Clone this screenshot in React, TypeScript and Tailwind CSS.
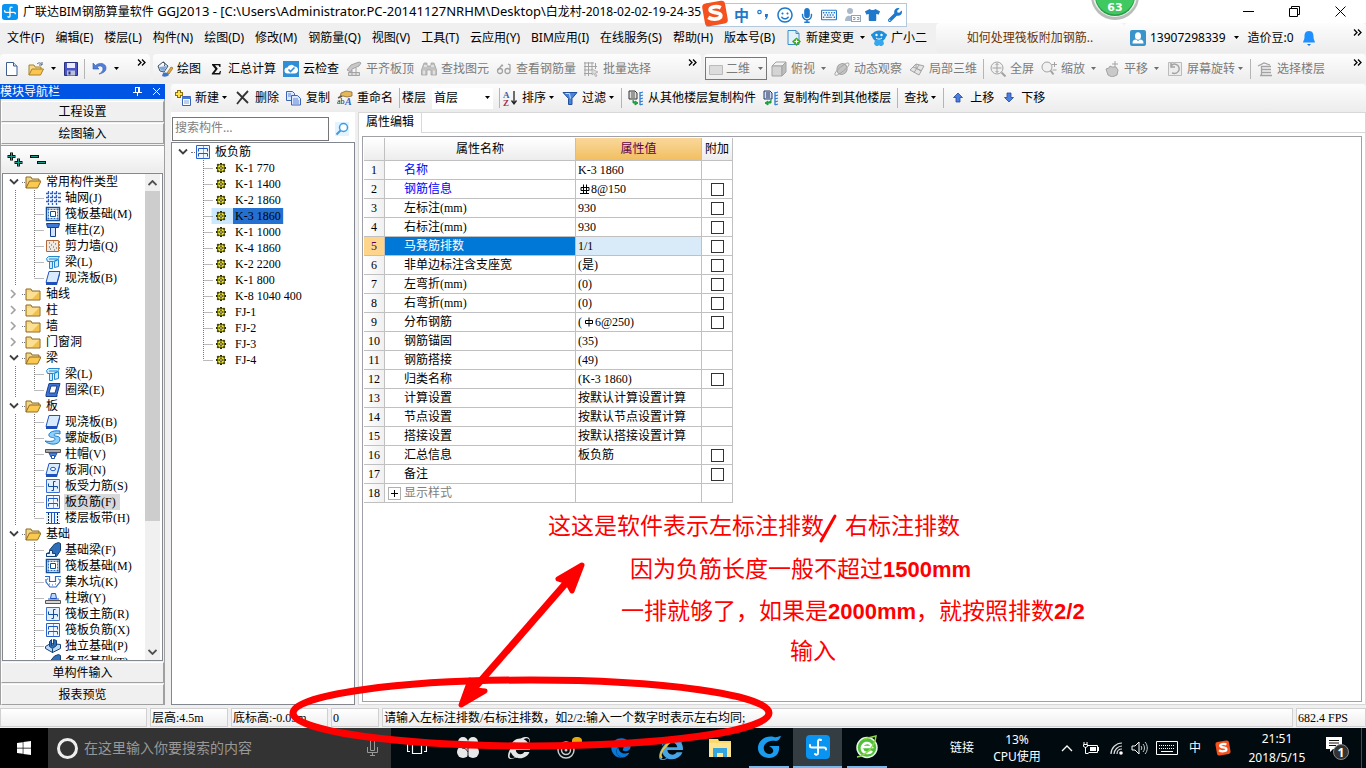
import React from "react";
import { FaWindows, FaInternetExplorer, FaEdge, FaMicrophone, FaRegSmile, FaRegKeyboard, FaWrench, FaTshirt } from "react-icons/fa";

const g = "#a3a3a3";

const art: Record<string, React.ReactNode> = {
  newdoc: (<><path d="M2.500 1.500h7l3.500 3.500v9.500H2.500z" fill="#fff" stroke="#3f5f8f" /><path d="M9.500 1.500v3.500H13" fill="#cfe0f5" stroke="#3f5f8f" /></>),
  open: (<><path d="M1 14V4h5l1 2h6v3" fill="#f6d98a" stroke="#a8812a" /><path d="M1 14l3-6h11.500l-3 6z" fill="#fbc54e" stroke="#a8812a" /><path d="M9 3c2-2 4-1 5 1m0-3v3h-3" fill="none" stroke="#4a6a8a" /></>),
  save: (<><path d="M1.500 1.500h13v13h-13z" fill="#4b55c8" stroke="#2a3080" /><path d="M4 2h8v5H4z" fill="#e9edff" /><path d="M4 9.500h8v5H4z" fill="#b9c0d8" /><path d="M5.500 10.500h2v3h-2z" fill="#2a3080" /></>),
  undo: (<path d="M2 2v6h6L6 6c3-2 6-1 6 2 0 2-2 4-4 5 5-1 7-3 7-6 0-5-7-6-10.500-2.500z" fill="#4f7fd8" stroke="#3059b0" strokeWidth=".6" />),
  paint: (<><path d="M1 5l5-4 5 4-4 6-4-1z" fill="#f4f8fc" stroke="#3b4e66" /><path d="M2 6l8-1-3 5-3-.500z" fill="#7fa9dd" /><path d="M6 1c2 0 2 2 1.500 4" stroke="#3b4e66" fill="none" /><path d="M10 12l4-6 2 1-4 6z" fill="#e5a93a" stroke="#7a5a20" strokeWidth=".6" /><path d="M6 12c3-1 5 0 6 2-2 2-5 2-7 1z" fill="#3d73c9" /></>),
  sigma: (<path d="M4 3h8.500v3h-1L10.500 4.300H7L9.800 7.700 6.500 12h4.500l1-2h1l-.700 3.500H3.800V12.500L7.300 8 4 4z" fill="#111" />),
  cloud: (<><path d="M0 0h16v16H0z" fill="#2f8fd6" /><path d="M4.500 12.500a3 3 0 0 1 0-6 4 4 0 0 1 7-1 3.300 3.300 0 0 1 0 7z" fill="#fff" /><path d="M5.500 8.500l2 2 4-4" fill="none" stroke="#2f8fd6" strokeWidth="1.600" /></>),
  align: (<><path d="M1 9l4-5 8-3 2 1-2 3-7 3-1 3z" fill="#c8c8c8" stroke={g} /><path d="M2.500 11.500h11v3h-11zM6 9v5M10 7v7" fill="#ddd" stroke={g} /></>),
  binoc: (<><path d="M3 2h3v3h4V2h3l2.500 7v5h-5.500V9H6v5H.500V9z" fill="#c2c2c2" stroke={g} strokeWidth=".8" /><path d="M3 9.500v4M13 9.500v4M3 5h3M10 5h3" stroke="#fff" /></>),
  glasses: (<><path d="M2 9l4-5 1 1M14 9V4l-2-1" fill="none" stroke={g} strokeWidth="1.300" /><circle cx="4" cy="10" r="2.500" fill="none" stroke={g} strokeWidth="1.300" /><circle cx="11.500" cy="10" r="2.500" fill="none" stroke={g} strokeWidth="1.300" /></>),
  batch: (<><path d="M1 2h10M1 5.500h13M1 9h8M1 12.500h8M2 1v14M5.500 1v14M9 1v8M12.500 2v6" stroke={g} fill="none" /><path d="M9 8l6 3-2.500 1 1.500 3-1.500.500-1.500-3-2 1.500z" fill="#ddd" stroke={g} strokeWidth="0.7" /></>),
  rect: (<path d="M1.500 4.500h13v9h-13z" fill="#dcdcdc" stroke="#bbb" />),
  cube: (<><path d="M1 5l4-4h10l-4 4z" fill="#f2f2f2" stroke={g} /><path d="M1 5h10v10H1z" fill="#d4d4d4" stroke={g} /><path d="M11 5l4-4v10l-4 4z" fill="#bdbdbd" stroke={g} /></>),
  planet: (<><ellipse cx="8" cy="8" rx="5" ry="5.500" fill="#c4c4c4" stroke={g} transform="rotate(30 8 8)" /><path d="M1 14c-1-2 3-6 7-9s7-4 7-2-3 5-7 8-6 4-7 3z" fill="none" stroke={g} /></>),
  partial: (<><path d="M1 9l6-6 8 2-5 9z" fill="#e4e4e4" stroke={g} /><path d="M4 6l8 3.500M10 4l-5 7.500M7 3v4l5 3" fill="none" stroke={g} /></>),
  full: (<><circle cx="7" cy="7" r="6" fill="#f1f1f1" stroke={g} /><path d="M7 2.500v9M2.500 7h9M5.500 4L7 2.500 8.500 4M5.500 10L7 11.500 8.500 10" stroke={g} fill="none" /><path d="M11.500 11.500l4 4" stroke={g} strokeWidth="2" /></>),
  zoomi: (<><circle cx="6" cy="6" r="5" fill="#f1f1f1" stroke={g} /><path d="M9.500 9.500l3 4" stroke={g} strokeWidth="2" /><path d="M13.500 1v5M11 3.500h5M11.500 9h4" stroke={g} fill="none" /></>),
  pan: (<><path d="M2 8l3-1 1-2 2 1h4l2 3-1 5-5 2-4-2z" fill="#c9c9c9" stroke={g} /><path d="M11 0v6M8 3h6" stroke={g} /></>),
  rot: (<><path d="M1.500 1.500h13v13h-13z" fill="#ededed" stroke="#bbb" /><path d="M4 5c3-4 9-1 8 4-1 3-4 4-7 3M4 2v4h4" fill="none" stroke={g} strokeWidth="1.500" /></>),
  floors: (<path d="M1 5l6-3 6 2M4 5.500h10M4 8.500h10M4 11.500h10M3 14.500h12M4.500 5v10" fill="none" stroke={g} strokeWidth="1.300" />),
  create: (<><path d="M4 0v8M0 4h8" stroke="#8a6d10" strokeWidth="4" /><path d="M4 1v6M1 4h6" stroke="#ffe34d" strokeWidth="2" /><path d="M7.500 6.500h8v9h-8z" fill="#fff" stroke="#3d63b5" /><path d="M7 7h9v2H7z" fill="#3d7be0" /><path d="M9 11h5M9 13h5" stroke="#7ba0dd" /></>),
  del: (<path d="M2 2l11 11M13 1C9 5 6 9 2 14" stroke="#333" strokeWidth="1.800" fill="none" />),
  copy: (<><path d="M.500 1.500h6l2 2v7h-8z" fill="#dbe8ff" stroke="#3d63b5" /><path d="M5.500 5.500h6l3 3v6.500h-9z" fill="#dbe8ff" stroke="#3d63b5" /><path d="M7 9h5M7 11h6M7 13h6M2 4h3M2 6h3" stroke="#5d88d5" /></>),
  rename: (<><path d="M4 3l5-2 6 1v4l-5 1-4-1-3 1z" fill="#e5b75a" stroke="#7d5a1e" strokeWidth="0.7" /><path d="M1 8l4-2" stroke="#555" strokeWidth="1.500" /><text x="0" y="14" fontSize="8" fontFamily="Liberation Serif" fill="#222">ab</text><text x="8" y="15" fontSize="10" fontWeight="bold" fontStyle="italic" fontFamily="Liberation Serif" fill="#2f62c0">A</text></>),
  az: (<><text x="1" y="7.500" fontSize="9" fontWeight="bold" fontFamily="Liberation Serif" fill="#3b5fa8">A</text><text x="1" y="15.500" fontSize="9" fontWeight="bold" fontFamily="Liberation Serif" fill="#a8324a">Z</text><path d="M12 1v12M9.500 10.500L12 14l2.500-3.500" fill="none" stroke="#222" strokeWidth="1.300" /></>),
  filter: (<><path d="M1 2.500h14L10 8.500v6H6.500v-6z" fill="#4684dc" stroke="#244f9c" /><path d="M3.500 3.500h4l1 5" fill="none" stroke="#c5defc" /></>),
  from: (<><path d="M1 1h6l2 2v6H1z" fill="#ddd" stroke="#333" /><path d="M3 3h4M3 5h4M3 7h4" stroke="#555" /><path d="M5 10v3h3M7 11l3 2-3 2z" fill="#1d9c3c" stroke="#1d9c3c" /><path d="M12 3l3-1M12 6l3-1M12 9l3-1M12 12l3-1M12 15l3-1M12 2v13" stroke="#2f7ad0" strokeWidth="1.300" /></>),
  to: (<><path d="M1 1h6l2 2v6H1z" fill="#cfe0f5" stroke="#223a66" /><path d="M3 3h4M3 5h4M3 7h4" stroke="#225" /><path d="M8 10v3H4M5 11l-3 2 3 2z" fill="#1d9c3c" stroke="#1d9c3c" /><path d="M12 3l3-1M12 6l3-1M12 9l3-1M12 12l3-1M12 15l3-1M12 2v13" stroke="#2f7ad0" strokeWidth="1.300" /></>),
  up: (<path d="M8 3l4.500 4.500H10V12H6V7.500H3.500z" fill="#4a7fe0" stroke="#23489a" strokeWidth="0.8" />),
  down: (<path d="M8 12l-4.500-4.500H6V3h4v4.500h2.500z" fill="#4a7fe0" stroke="#23489a" strokeWidth="0.8" />),
  docplus: (<><path d="M2 .500h8l3 3v11H2z" fill="#e3f1fb" stroke="#3e8cc4" /><path d="M10 .500v3h3" fill="none" stroke="#3e8cc4" /><path d="M10.500 7.500l4.500 4-4.500 4.500L6 11.500z" fill="#3da81e" /><path d="M10.500 9.500v4M8.500 11.500h4" stroke="#fff" strokeWidth="1.200" /></>),
  robot: (<><ellipse cx="8" cy="6" rx="7" ry="5.500" fill="#1b8fdc" /><circle cx="1.500" cy="5" r="1.500" fill="#1b8fdc" /><circle cx="14.500" cy="5" r="1.500" fill="#1b8fdc" /><path d="M4 10h8l1 4-2 2H9l-1-1-1 1H5l-2-2z" fill="#35a7ec" /><circle cx="5.500" cy="5" r="1.200" fill="#fff" /><circle cx="10.500" cy="5" r="1.200" fill="#fff" /><path d="M5 8c2 1.500 4 1.500 6 0" stroke="#fff" fill="none" /></>),
  user: (<><rect width="16" height="16" rx="2" fill="#3a94cb" /><ellipse cx="8" cy="6" rx="3" ry="3.800" fill="#fff" /><path d="M2.500 13.500c0-3 1-4 3.500-4l2 1.500 2-1.500c2.500 0 3.500 1 3.500 4z" fill="#fff" /></>),
  bell: (<><path d="M8 1c-4 0-4.500 3-4.500 6C3.500 10 2 11 2 12.500h12C14 11 12.500 10 12.500 7c0-3-.500-6-4.500-6z" fill="#1e90ff" /><path d="M6 14h4l-2 2z" fill="#1e70e0" /></>),
  folder: (<><path d="M1 3h5l1 2h8v9H1z" fill="#f9d680" stroke="#8d6b20" /><path d="M2 6h12v7H2z" fill="#fbdf93" /><path d="M14 6v7H7z" fill="#f2c04d" /></>),
  folderOpen: (<><path d="M1 14V3h5l1 2h7v3" fill="#f3d68c" stroke="#8d6b20" /><path d="M1 14l3.500-7H16l-3.500 7z" fill="#fbc950" stroke="#8d6b20" /></>),
  grid: (<path d="M3.500 1v14M7.500 1v14M11.500 1v14M1 3.500h15M1 7.500h15M1 11.500h15" stroke="#2d5fc4" strokeWidth="1.300" strokeDasharray="3 1" />),
  raft: (<><path d="M1.500 1.500h13v13h-13z" fill="#fff" stroke="#134f94" strokeWidth="1.500" /><path d="M5.500 5.500h5v5h-5z" fill="#fff" stroke="#134f94" /><path d="M3.500 2.500v11M12.500 2.500v11M2.500 3.500h11M2.500 12.500h11" stroke="#2f6fc0" strokeDasharray="2 1" /></>),
  column: (<><path d="M1.500 1.500h13l-1 4h-11z" fill="#3f78d4" stroke="#123f94" /><path d="M5.500 5.500h5v9h-5z" fill="#cfe4fd" stroke="#123f94" /></>),
  wall: (<><path d="M1.500 2.500h12v11h-12z" fill="#efe9e4" stroke="#b0683c" /><path d="M4 5h1M8 4h1M6 7h1M10 6h1M4 9h1M8 9h1M11 10h1M5 11h1M9 12h1" stroke="#555" /><path d="M14 3v10" stroke="#d07838" strokeWidth="2" strokeDasharray="2 1" /></>),
  beam: (<><path d="M1.500 4.500l2-2h11l-2 3-4 2h-6zM4.500 7.500h3v7h-3zM9.500 13.500v-6l4-2v7z" fill="#cdebfc" stroke="#2686cc" /><path d="M4 5h8" stroke="#2686cc" /></>),
  slab: (<><path d="M4 1.500h11l-3 11H1z" fill="#d9ecff" stroke="#1f55c0" /><path d="M1 12.500h11V15H1zM12 12.500l3-11v3L12 15z" fill="#1f4fb8" /></>),
  ring: (<><path d="M4 1.500h11l-3 11v2H1v-2z" fill="#3d73d4" stroke="#173f92" /><path d="M6 4h6l-2 7H4z" fill="#fff" stroke="#173f92" /></>),
  spiral: (<path d="M15 1C7 0 3 3 4 6c1 2 6 1 6 3s-4 3-10 2c3 4 15 5 15-2 0-4-6-2-6-4 0-1 3-2 6-1z" fill="#8fd0f8" stroke="#1d7bd0" />),
  cap: (<><path d="M.500 3.500h15v3H.500z" fill="#aaa" stroke="#555" /><path d="M4 7h8l-2 4H6z" fill="#4f8be2" stroke="#1f4fa8" /><path d="M6.500 9.500h3v3h-3z" fill="#fff" stroke="#1f4fa8" /></>),
  hole: (<><path d="M4 1.500h11l-3 11H1z" fill="#d9ecff" stroke="#1f55c0" /><path d="M1 12.500h11V15H1zM12 12.500l3-11v3L12 15z" fill="#1f4fb8" /><ellipse cx="8" cy="7" rx="2.500" ry="1.700" fill="#fff" stroke="#1f55c0" /></>),
  mainbar: (<><path d="M1.500 1.500h13v13h-13z" fill="#e2efff" stroke="#3a6fd6" /><path d="M8.500 12.500v-9h2M8.500 12.500h-2M3.500 5.500v3h9v2" fill="none" stroke="#134a9c" /></>),
  negbar: (<><path d="M1.500 1.500h13v13h-13z" fill="#eef6ff" stroke="#2b5fc9" /><path d="M8.500 2v12" stroke="#7aa4e0" /><path d="M3.500 7.500v-3h9v3M3.500 12.500v-3h9v3" fill="none" stroke="#1f55c0" /></>),
  strip: (<><path d="M1 2.500h14M1 13.500h14" stroke="#1f55c0" /><path d="M1 4h14v8H1z" fill="#e6f2ff" /><path d="M3.500 3v10M12.500 3v10" stroke="#123" strokeDasharray="2 1" /><path d="M6.500 3v10M9.500 3v10" stroke="#1f55c0" /></>),
  fbeam: (<><path d="M1.500 14.500v-3l3-1V8l5-6 4-1.500 2 1v7l-4 6z" fill="#2d6fb8" stroke="#143f78" /><path d="M1.500 11.500h3v-3h3v3h3v3h-9z" fill="#e6f2ff" stroke="#143f78" /></>),
  pit: (<path d="M0 2.500h4.500V7.500h6V2.500H16M1 5v3l4 5h6l4-5V5M4 10h1M7 11h1M10 10h1M2 5h1M13 5h1" fill="none" stroke="#2b66c9" strokeWidth="1.200" />),
  pier: (<><path d="M5.500 8.500l1-5h4l1 5zM3 9h11" fill="#bcd7fa" stroke="#1f55c0" /><path d="M.500 10.500h15v3H.500z" fill="#d5d5d5" stroke="#555" /></>),
  iso: (<><path d="M.500 8.500l5-3 10 1v4l-8 4-7-4z" fill="#bcdcf8" stroke="#143f78" /><path d="M4.500 3.500l2-2v6l2-1v-5l3 1v5l-4 3-3-2z" fill="#2d6fb8" stroke="#143f78" /><path d="M7.500 11v4" stroke="#143f78" /></>),
  gear: (<><path d="M8 3v10M3 8h10M4.300 4.300l7.400 7.400M11.700 4.300l-7.400 7.400" stroke="#2c2c00" strokeWidth="2" /><circle cx="8" cy="8" r="3.800" fill="#f2ee22" stroke="#2c2c00" strokeWidth="0.8" /><path d="M8 4.500v7M4.500 8h7" stroke="#2c2c00" strokeWidth="0.8" /><circle cx="8" cy="8" r="1.300" fill="#fff" stroke="#2c2c00" strokeWidth="0.8" /></>),
};

function Ic({ n }: { n: string }) {
  return (
    <svg viewBox="0 0 16 16" className="h-4 w-4 shrink-0" aria-hidden="true">
      {art[n]}
    </svg>
  );
}

function Caret({ dim = false }: { dim?: boolean }) {
  return (
    <svg viewBox="0 0 7 4" className="h-1 w-[7px] shrink-0" aria-hidden="true">
      <path d="M1 0h5L3.500 3z" fill={dim ? "#6d6d6d" : "#000"} />
    </svg>
  );
}

function Sep() {
  return <span className="-mx-px h-5 w-px shrink-0 bg-[#b5b5b5]" />;
}

function More() {
  return (
    <button aria-label="更多" className="mb-3 px-1">
      <svg viewBox="0 0 9 7" className="h-[7px] w-[9px]"><path d="M1 .500l3 3-3 3M5 .500l3 3-3 3" fill="none" stroke="#000" strokeWidth="1.300" /></svg>
    </button>
  );
}

type ToolProps = { icon?: string; label: string; off?: boolean; drop?: "near" | "far" };
function Tool({ icon, label, off, drop }: ToolProps) {
  return (
    <button className={off ? "flex shrink-0 items-center gap-1 text-[#7b7b7b]" : "flex shrink-0 items-center gap-1 text-black"}>
      {icon && <Ic n={icon} />}
      <span className="whitespace-nowrap">{label}</span>
      {drop === "near" && <span className="-ml-0.5"><Caret dim={off} /></span>}
      {drop === "far" && <span className="ml-px"><Caret dim={off} /></span>}
    </button>
  );
}

function AppLogo({ className }: { className: string }) {
  return (
    <svg viewBox="0 0 24 24" className={className} aria-hidden="true">
      <rect width="24" height="24" rx="4" fill="#0a94f2" />
      <path d="M15 5c-2-1-3 0-3 2v11c0 2-2 2-3 1M4 10v1c0 1 1 1.500 2 1.500h12c1 0 2 .500 2 2" fill="none" stroke="#fff" strokeWidth="2" strokeLinecap="round" />
    </svg>
  );
}

function Sogou({ className }: { className: string }) {
  return (
    <svg viewBox="0 0 28 28" className={className} aria-hidden="true">
      <rect x="2" y="2" width="24" height="24" rx="4" fill="#f4511e" transform="rotate(-10 14 14)" />
      <path d="M20 8c-4-2-11-1-11 2 0 4 11 2 11 6 0 4-8 5-13 2" fill="none" stroke="#fff" strokeWidth="4" />
    </svg>
  );
}

const menus = ["文件(F)", "编辑(E)", "楼层(L)", "构件(N)", "绘图(D)", "修改(M)", "钢筋量(Q)", "视图(V)", "工具(T)", "云应用(Y)", "BIM应用(I)", "在线服务(S)", "帮助(H)", "版本号(B)"];

type Node = { label: string; icon?: string; root?: boolean; closed?: boolean; last?: boolean; on?: boolean };
const modules: Node[] = [
  { label: "常用构件类型", root: true },
  { label: "轴网(J)", icon: "grid" },
  { label: "筏板基础(M)", icon: "raft" },
  { label: "框柱(Z)", icon: "column" },
  { label: "剪力墙(Q)", icon: "wall" },
  { label: "梁(L)", icon: "beam" },
  { label: "现浇板(B)", icon: "slab", last: true },
  { label: "轴线", root: true, closed: true },
  { label: "柱", root: true, closed: true },
  { label: "墙", root: true, closed: true },
  { label: "门窗洞", root: true, closed: true },
  { label: "梁", root: true },
  { label: "梁(L)", icon: "beam" },
  { label: "圈梁(E)", icon: "ring", last: true },
  { label: "板", root: true },
  { label: "现浇板(B)", icon: "slab" },
  { label: "螺旋板(B)", icon: "spiral" },
  { label: "柱帽(V)", icon: "cap" },
  { label: "板洞(N)", icon: "hole" },
  { label: "板受力筋(S)", icon: "mainbar" },
  { label: "板负筋(F)", icon: "negbar", on: true },
  { label: "楼层板带(H)", icon: "strip", last: true },
  { label: "基础", root: true },
  { label: "基础梁(F)", icon: "fbeam" },
  { label: "筏板基础(M)", icon: "raft" },
  { label: "集水坑(K)", icon: "pit" },
  { label: "柱墩(Y)", icon: "pier" },
  { label: "筏板主筋(R)", icon: "mainbar" },
  { label: "筏板负筋(X)", icon: "negbar" },
  { label: "独立基础(P)", icon: "iso" },
  { label: "条形基础(T)", icon: "fbeam" },
];

function Chevron({ closed }: { closed?: boolean }) {
  return (
    <svg viewBox="0 0 16 16" className="h-4 w-4 shrink-0" aria-hidden="true">
      {closed ? <path d="M5 4l4 4-4 4" fill="none" stroke="#a0a0a0" strokeWidth="1.600" /> : <path d="M4 5.500l4 4 4-4" fill="none" stroke="#404040" strokeWidth="1.800" />}
    </svg>
  );
}

function ModuleRow({ n }: { n: Node }) {
  if (n.root) {
    return (
      <li className="flex h-4 items-center pl-[3px]">
        <Chevron closed={n.closed} />
        <span className="w-[3px] border-t border-dotted border-[#777]" />
        <span className="mr-[5px] flex"><Ic n={n.closed ? "folder" : "folderOpen"} /></span>
        <span>{n.label}</span>
      </li>
    );
  }
  return (
    <li className="flex h-4 items-center">
      <svg viewBox="0 0 42 16" className="h-4 w-[42px] shrink-0" aria-hidden="true">
        <path d={n.last ? "M12.500 0v16M31.500 0v8M31.500 8.500h10" : "M12.500 0v16M31.500 0v16M31.500 8.500h10"} fill="none" stroke="#777" strokeDasharray="1 1" />
      </svg>
      <Ic n={n.icon!} />
      <span className={n.on ? "ml-[3px] h-4 bg-[#d9d9d9] pr-1 pl-px" : "ml-1"}>{n.label}</span>
    </li>
  );
}

const parts = ["K-1 770", "K-1 1400", "K-2 1860", "K-3 1860", "K-1 1000", "K-4 1860", "K-2 2200", "K-1 800", "K-8 1040 400", "FJ-1", "FJ-2", "FJ-3", "FJ-4"];

type Prop = { name: string; value: React.ReactNode; box?: boolean; key?: boolean };
function Rebar({ double }: { double?: boolean }) {
  return (
    <svg viewBox="0 0 10 10" className="mr-px ml-0.5 inline h-2.5 w-2.5 align-[-1px]" role="img" aria-label="Φ">
      <path d={double ? "M1 3.500h8v3H1zM3.500 .500v9M6.500 .500v9M0 9.500h9" : "M1.500 3.500h7v3h-7zM5 .500v9"} fill="none" stroke="#000" />
    </svg>
  );
}
const rows: Prop[] = [
  { name: "名称", value: "K-3 1860", key: true },
  { name: "钢筋信息", value: <><Rebar double />8@150</>, box: true, key: true },
  { name: "左标注(mm)", value: "930", box: true },
  { name: "右标注(mm)", value: "930", box: true },
  { name: "马凳筋排数", value: "1/1", box: true },
  { name: "非单边标注含支座宽", value: "(是)", box: true },
  { name: "左弯折(mm)", value: "(0)", box: true },
  { name: "右弯折(mm)", value: "(0)", box: true },
  { name: "分布钢筋", value: <>(<Rebar />6@250)</>, box: true },
  { name: "钢筋锚固", value: "(35)" },
  { name: "钢筋搭接", value: "(49)" },
  { name: "归类名称", value: "(K-3 1860)", box: true },
  { name: "计算设置", value: "按默认计算设置计算" },
  { name: "节点设置", value: "按默认节点设置计算" },
  { name: "搭接设置", value: "按默认搭接设置计算" },
  { name: "汇总信息", value: "板负筋", box: true },
  { name: "备注", value: "", box: true },
  { name: "显示样式", value: "" },
];

const bar = "flex h-full items-center bg-linear-to-b from-[#fdfdfd] to-[#ececec] rounded-sm";
const navBtn = "h-[21px] shrink-0 border border-[#a0a0a0] border-t-white border-l-white bg-[#f0f0f0] text-center leading-5";
const cell = "border-r border-b border-[#c0c0c0] p-0";

function PropertyTable() {
  return (
    <table className="w-[369px] table-fixed border-separate border-spacing-0 leading-[18px]">
      <colgroup>
        <col className="w-[21px]" /><col className="w-[191px]" /><col className="w-[126px]" /><col className="w-[31px]" />
      </colgroup>
      <thead>
        <tr className="h-[23px] bg-linear-to-b from-white to-[#ececec]">
          <th className={cell} aria-label="序号"></th>
          <th className={`${cell} font-normal`}>属性名称</th>
          <th className={`${cell} bg-linear-to-b from-[#f9d79b] to-[#f2bf5f] font-normal text-[#600050]`}>属性值</th>
          <th className={`${cell} font-normal`}>附加</th>
        </tr>
      </thead>
      <tbody>
        {rows.map((r, i) => {
          const sel = i === 4;
          const last = i === 17;
          return (
            <tr key={r.name} className="h-[19px]">
              <td className={`${cell} text-center ${sel ? "bg-[#ffd58c] text-[#600050]" : "bg-linear-to-r from-white to-[#f0f0f0]"}`}>{i + 1}</td>
              <td className={`${cell} ${sel ? "bg-[#0078d7] text-white" : r.key ? "text-[#0000ff]" : last ? "text-[#808080]" : ""}`}>
                <span className="flex items-center">
                  <span className="flex w-[19px] justify-center">
                    {last && (
                      <button aria-label="展开显示样式" className="flex h-[13px] w-[13px] items-center justify-center border border-[#b0b0b0] bg-white">
                        <svg viewBox="0 0 9 9" className="h-[9px] w-[9px]"><path d="M1 4.500h7M4.500 1v7" stroke="#000" /></svg>
                      </button>
                    )}
                  </span>
                  {r.name}
                </span>
              </td>
              <td className={`${cell} pl-0.5 ${sel ? "bg-[#d9eaf9]" : ""}`}>{r.value}</td>
              <td className={cell}>
                {r.box && <input type="checkbox" aria-label={`附加 ${r.name}`} className="mx-auto block h-[13px] w-[13px] appearance-none border border-[#333] bg-white" />}
              </td>
            </tr>
          );
        })}
      </tbody>
    </table>
  );
}

function TitleBar() {
  return (
    <header className="relative flex h-[23px] shrink-0 items-center bg-white pl-0.5">
      <AppLogo className="h-4 w-4" />
      <h1 className="ml-[5px] grow whitespace-nowrap">广联达BIM钢筋算量软件<span className="text-[13px]"> GGJ2013 - [C:\Users\Administrator.PC-20141127NRHM\Desktop\</span>白龙村-2018-02-02-19-24-35</h1>
      <div className="flex items-center gap-[35px] pr-5">
        <button aria-label="最小化"><svg viewBox="0 0 11 11" className="h-[11px] w-[11px]"><path d="M0 5.500h11" stroke="#000" /></svg></button>
        <button aria-label="还原"><svg viewBox="0 0 11 11" className="h-[11px] w-[11px]"><path d="M.500 2.500h8v8h-8zM2.500 2.500v-2h8v8h-2" fill="none" stroke="#000" /></svg></button>
        <button aria-label="关闭"><svg viewBox="0 0 11 11" className="h-[11px] w-[11px]"><path d="M.500 .500l10 10M10.500 .500l-10 10" stroke="#000" /></svg></button>
      </div>
      <div className="absolute top-[3px] left-[706px] z-20 flex h-6 w-[201px] items-center gap-2 border border-[#b3c7dd] bg-white pl-[27px] text-[#1f78cc]">
        <Sogou className="absolute -top-1 -left-1.5 h-[27px] w-[28px]" />
        <span className="text-[15px] leading-5 font-bold">中</span>
        <svg viewBox="0 0 12 12" className="h-3 w-3"><circle cx="2.500" cy="3" r="1.700" fill="none" stroke="currentColor" strokeWidth="1.200" /><path d="M8 5h3c0 3-1 5-3 6l1-3H8z" fill="currentColor" /></svg>
        <FaRegSmile className="h-4 w-4" />
        <FaMicrophone className="h-[15px] w-3" />
        <FaRegKeyboard className="h-4 w-4" />
        <svg viewBox="0 0 16 14" className="h-3.5 w-4"><circle cx="5" cy="3" r="3" fill="#a9b9cc" /><path d="M0 13c0-5 3-6 6-5v5z" fill="#a9b9cc" /><rect x="6.500" y="7.500" width="9" height="6" fill="#fff" stroke="#8fa3bb" /><path d="M8 9.500h2v2H8M12 9.500h2v2h-2" fill="none" stroke="#8fa3bb" /></svg>
        <FaTshirt className="-ml-1 h-3.5 w-[15px]" />
        <FaWrench className="h-3.5 w-3.5" />
      </div>
      <svg viewBox="0 0 50 24" className="absolute top-0 left-[1090px] z-20 h-6 w-[50px]">
        <circle cx="25" cy="-4" r="24" fill="#b9bdb9" /><circle cx="25" cy="-5" r="22" fill="#e9efe9" /><circle cx="25" cy="-4" r="20" fill="#2a9b48" /><circle cx="25" cy="-5" r="19.500" fill="#40c961" />
        <text x="25" y="11" textAnchor="middle" fontSize="11" fontWeight="bold" fontFamily="DejaVu Sans, sans-serif" fill="#fff">63</text>
      </svg>
    </header>
  );
}

function MenuBar() {
  return (
    <nav className="flex h-[30px] shrink-0 items-center bg-[#f0f0f0]">
      <div className="flex w-[936px] shrink-0 items-center gap-[11px] pl-[7px]">
        {menus.map((m) => <button key={m} className="shrink-0 whitespace-nowrap">{m}</button>)}
        <span className="flex shrink-0 items-center gap-[5px]"><Tool icon="docplus" label="新建变更" /><Caret /><Tool icon="robot" label="广小二" /></span>
      </div>
      <div className={`${bar} w-[188px] justify-center`}><a href="#tip" className="text-[#6b3304]">如何处理筏板附加钢筋..</a></div>
      <div className={`${bar} grow gap-[7px] pl-1.5`}>
        <Tool icon="user" label="13907298339" />
        <Caret />
        <span className="ml-px">造价豆:0</span>
        <Ic n="bell" />
        <span className="ml-auto flex"><More /></span>
      </div>
    </nav>
  );
}

function ViewBar() {
  return (
    <div className="flex h-[30px] shrink-0 items-center gap-[3px] pt-px">
      <div className={`${bar} w-[150px] shrink-0 pl-1`}>
        <button aria-label="新建文件" className="mr-2"><Ic n="newdoc" /></button>
        <button aria-label="打开" className="mr-[6px]"><Ic n="open" /></button>
        <Caret />
        <button aria-label="保存" className="mx-1.5"><Ic n="save" /></button>
        <Sep />
        <button aria-label="撤销" className="mr-[6px] ml-[7px]"><Ic n="undo" /></button>
        <Caret />
        <span className="ml-auto flex"><More /></span>
      </div>
      <div className={`${bar} w-[548px] shrink-0 gap-[7px] pl-1`}>
        <Tool icon="paint" label="绘图" />
        <Tool icon="sigma" label="汇总计算" />
        <Tool icon="cloud" label="云检查" />
        <Tool icon="align" label="平齐板顶" off />
        <Tool icon="binoc" label="查找图元" off />
        <Tool icon="glasses" label="查看钢筋量" off />
        <Tool icon="batch" label="批量选择" off />
        <span className="ml-auto flex"><More /></span>
      </div>
      <div className={`${bar} grow gap-[7px] pl-px`}>
        <label className="-mr-[3px] flex h-[23px] w-[62px] shrink-0 items-center gap-0.5 border border-[#777] pl-0.5 text-[#7b7b7b]">
          <Ic n="rect" />
          <select aria-label="视图模式" className="w-[29px] appearance-none bg-transparent outline-none"><option>二维</option></select>
          <Caret dim />
        </label>
        <Tool icon="cube" label="俯视" off drop="far" />
        <Tool icon="planet" label="动态观察" off />
        <Tool icon="partial" label="局部三维" off />
        <Sep />
        <Tool icon="full" label="全屏" off />
        <Tool icon="zoomi" label="缩放" off drop="far" />
        <Tool icon="pan" label="平移" off drop="far" />
        <Tool icon="rot" label="屏幕旋转" off drop="near" />
        <Sep />
        <Tool icon="floors" label="选择楼层" off />
        <span className="ml-auto flex"><More /></span>
      </div>
    </div>
  );
}

function PartBar() {
  return (
    <div className="h-[29px] shrink-0 pt-px">
      <div className={`${bar} gap-[7px] pl-1`}>
        <Tool icon="create" label="新建" drop="near" />
        <Tool icon="del" label="删除" />
        <Tool icon="copy" label="复制" />
        <Tool icon="rename" label="重命名" />
        <Sep />
        <label className="-ml-1 flex items-center gap-1.5">楼层
          <span className="flex h-[21px] w-[61px] items-center bg-white pl-0.5">
            <select className="w-[50px] appearance-none bg-transparent outline-none"><option>首层</option></select>
            <Caret />
          </span>
        </label>
        <Sep />
        <span className="-ml-1 flex"><Tool icon="az" label="排序" drop="near" /></span>
        <Tool icon="filter" label="过滤" drop="near" />
        <Sep />
        <Tool icon="from" label="从其他楼层复制构件" />
        <Tool icon="to" label="复制构件到其他楼层" />
        <Sep />
        <Tool label="查找" drop="near" />
        <Sep />
        <Tool icon="up" label="上移" />
        <Tool icon="down" label="下移" />
      </div>
    </div>
  );
}

function ModulePanel() {
  return (
    <aside className="flex w-[165px] shrink-0 flex-col pt-px">
      <div className="flex h-[15px] shrink-0 items-center bg-[#0054e3] text-[12px] leading-[15px] text-white">
        <h2 className="grow">模块导航栏</h2>
        <button aria-label="固定" className="mr-2.5"><svg viewBox="0 0 9 9" className="h-[9px] w-[9px]"><path d="M2 .500h5M2.500 .500v5M6.500 .500v5M0 5.500h9M4.500 5.500v3.500M5.500 1v4" stroke="#fff" fill="none" /></svg></button>
        <button aria-label="关闭面板" className="mr-1"><svg viewBox="0 0 9 9" className="h-[9px] w-[9px]"><path d="M1 1l7 7M8 1l-7 7" stroke="#fff" /></svg></button>
      </div>
      <div className="flex min-h-0 grow flex-col gap-px border-x border-[#a0a0a0] pt-0.5">
        <button className={navBtn}>工程设置</button>
        <button className={navBtn}>绘图输入</button>
        <div className="flex h-[27px] shrink-0 items-center gap-[7px] border-t border-[#a0a0a0] bg-linear-to-b from-white to-[#ececec] pl-1.5">
          <button aria-label="全部展开"><svg viewBox="0 0 16 15" className="h-[15px] w-4"><path d="M4.500 .500v8M.500 4.500h8M11.500 6.500v8M7.500 10.500h8" stroke="#111" strokeWidth="3" /><path d="M4.500 1v7M1 4.500h7M11.500 7v7M8 10.500h7" stroke="#159c8c" /></svg></button>
          <button aria-label="全部折叠"><svg viewBox="0 0 16 15" className="h-[15px] w-4"><path d="M0 4.500h9M7 10.500h9" stroke="#111" strokeWidth="3" /><path d="M1 4.500h7M8 10.500h7" stroke="#159c8c" /></svg></button>
        </div>
        <div className="mx-px flex min-h-0 grow basis-0 overflow-hidden border border-[#828790] bg-white font-['Liberation_Serif','Noto_Sans_CJK_SC',serif]">
          <ul className="min-w-0 grow leading-4 whitespace-nowrap">
            {modules.map((n, i) => <ModuleRow key={i} n={n} />)}
          </ul>
          <div className="flex w-[15px] shrink-0 flex-col bg-[#f0f0f0]">
            <button aria-label="向上滚动" className="flex h-[17px] items-center justify-center"><svg viewBox="0 0 9 6" className="h-1.5 w-[9px]"><path d="M.500 5l4-4 4 4" fill="none" stroke="#505050" strokeWidth="1.800" /></svg></button>
            <div className="h-[330px] bg-[#cdcdcd]" />
            <button aria-label="向下滚动" className="mt-auto flex h-[17px] items-center justify-center"><svg viewBox="0 0 9 6" className="h-1.5 w-[9px]"><path d="M.500 1l4 4 4-4" fill="none" stroke="#505050" strokeWidth="1.800" /></svg></button>
          </div>
          <div className="w-0.5 shrink-0" />
        </div>
        <button className={navBtn}>单构件输入</button>
        <button className={navBtn}>报表预览</button>
      </div>
    </aside>
  );
}

function PartPanel() {
  return (
    <section className="flex w-[184px] shrink-0 flex-col">
      <div className="flex h-[30px] shrink-0 items-center bg-white pt-1 pl-px">
        <input type="text" aria-label="搜索构件" placeholder="搜索构件…" className="h-6 w-[157px] border border-[#767676] bg-white px-0.5 pb-1 outline-none placeholder:text-[#808080]" />
        <button aria-label="搜索" className="ml-1.5"><svg viewBox="0 0 14 14" className="h-3.5 w-3.5"><path d="M0 0h14v14H0z" fill="#e3f3ff" /><circle cx="8.500" cy="5.500" r="4" fill="#fff" stroke="#3f9be0" strokeWidth="1.500" /><path d="M5.500 8.500l-4 4" stroke="#3f9be0" strokeWidth="2" /></svg></button>
      </div>
      <div className="min-h-0 grow overflow-hidden border border-[#828790] bg-white pt-px font-['Liberation_Serif','Noto_Sans_CJK_SC',serif] leading-4">
        <div className="flex h-4 items-center pl-[3px]">
          <Chevron />
          <span className="w-1 border-t border-dotted border-[#777]" />
          <Ic n="negbar" />
          <span className="ml-1">板负筋</span>
        </div>
        <ul>
          {parts.map((p, i) => (
            <li key={p} className="flex h-4 items-center pl-[31px]">
              <svg viewBox="0 0 10 16" className="h-4 w-2.5 shrink-0" aria-hidden="true">
                {i === 3 && <path d="M8.500 0H10v16H8.500z" fill="#cce8ff" />}
                <path d={i === 12 ? "M.500 0v8M.500 8.500h10" : "M.500 0v16M.500 8.500h10"} fill="none" stroke="#777" strokeDasharray="1 1" />
              </svg>
              <span className={i === 3 ? "flex bg-[#cce8ff] pr-px" : "flex"}>
                <Ic n="gear" />
                <span className={i === 3 ? "ml-1 bg-[#2470d0] px-0.5" : "ml-1 px-0.5"}>{p}</span>
              </span>
            </li>
          ))}
        </ul>
      </div>
    </section>
  );
}

const seg = "h-[19px] shrink-0 border border-[#d0d0d0] bg-linear-to-b from-white to-[#efefef] pl-px leading-[18px] whitespace-nowrap";

function TaskBar() {
  return (
    <footer className="flex h-10 shrink-0 items-center bg-[#010b0f] text-white">
      <button aria-label="开始" className="flex h-full w-12 items-center justify-center bg-black"><FaWindows className="h-4 w-4" /></button>
      <label className="flex h-full w-[343px] shrink-0 items-center bg-[#333] pl-[9px]">
        <span className="h-[21px] w-[21px] shrink-0 rounded-full border-[3px] border-[#eee]" />
        <input type="text" aria-label="搜索" placeholder="在这里输入你要搜索的内容" className="ml-1.5 w-[270px] bg-transparent text-[14px] outline-none placeholder:text-[#989898]" />
        <svg viewBox="0 0 14 18" className="ml-3 h-[18px] w-3.5"><path d="M4.500 1.500h4v10h-4zM1.500 8v5.500h10V8M6.500 13.500v3M4 16.500h5" fill="none" stroke="#999" /></svg>
      </label>
      <button aria-label="任务视图" className="flex w-[51px] justify-center"><svg viewBox="0 0 20 14" className="h-3.5 w-5"><path d="M5.500 .500h9v12h-9zM3 2.500H.500v8H3M17 2.500h2.500v8H17" fill="none" stroke="#fff" strokeWidth="1.200" /></svg></button>
      <button aria-label="应用" className="flex w-[51px] justify-center"><svg viewBox="0 0 22 22" className="h-[22px] w-[22px]"><circle cx="6" cy="5" r="5" fill="#e8e8e8" /><circle cx="16" cy="5" r="5" fill="#e8e8e8" /><circle cx="6" cy="15" r="6" fill="#e8e8e8" /><circle cx="16" cy="15" r="6" fill="#e8e8e8" /><path d="M11 9v10M5 11c3 0 5 2 6 4" stroke="#222" fill="none" /></svg></button>
      <button aria-label="浏览器" className="flex w-[51px] justify-center"><FaInternetExplorer className="h-[22px] w-[22px] text-[#e6e6e6]" /></button>
      <button aria-label="录音" className="flex w-[51px] justify-center"><svg viewBox="0 0 26 24" className="h-6 w-[26px]"><circle cx="9" cy="14" r="8" fill="none" stroke="#ccc" strokeWidth="1.500" /><circle cx="9" cy="14" r="4.500" fill="none" stroke="#ccc" strokeWidth="1.500" /><circle cx="9" cy="14" r="1.500" fill="#ccc" /><path d="M15 9V5c0-3 2-4 5-4s5 1 5 4v4z" fill="#e8a80c" /></svg></button>
      <button aria-label="Edge" className="flex w-[51px] justify-center"><FaEdge className="h-5 w-5 text-[#0a78d8]" /></button>
      <button aria-label="Internet Explorer" className="flex w-[49px] justify-center"><span className="relative flex"><FaInternetExplorer className="h-6 w-6 text-[#48a6e6]" /><svg viewBox="0 0 24 24" className="absolute inset-0 h-6 w-6"><path d="M3 22C-1 18 6 9 13 5c6-4 11-5 9-1" fill="none" stroke="#f2c230" strokeWidth="1.800" /></svg></span></button>
      <button aria-label="文件资源管理器" className="flex w-[49px] justify-center"><svg viewBox="0 0 22 18" className="h-[18px] w-[22px]"><path d="M0 0h9l1 2h12v16H0z" fill="#fbd96c" /><path d="M0 4h22v14H0z" fill="#fde48e" /><path d="M4 18V9h14v9h-4v-4H8v4z" fill="#35a5e0" /></svg></button>
      <button aria-label="广联达" className="flex h-full w-[49px] flex-col items-center"><svg viewBox="0 0 24 24" className="my-auto h-6 w-6"><path d="M24 1c-3 0-4 2-7 1C9 0 1 5 1 13c0 6 5 10 11 10 7 0 11-5 10-12H12c5 2 6 7 1 8-5 0-7-4-6-8 2-5 8-6 12-5 3 0 4-3 5-5z" fill="#1a9df0" /></svg><span className="h-0.5 w-10 bg-[#76b9ed]" /></button>
      <button aria-label="广联达BIM钢筋算量" className="flex h-full w-[49px] flex-col items-center bg-[#333d42]"><AppLogo className="my-auto h-6 w-6" /><span className="h-0.5 w-full bg-[#76b9ed]" /></button>
      <button aria-label="安全浏览器" className="flex h-full w-[49px] flex-col items-center"><svg viewBox="0 0 24 24" className="my-auto h-6 w-6"><circle cx="12" cy="12.500" r="10" fill="#4fbf3b" stroke="#e8f6e4" strokeWidth="1.500" /><path d="M17 16c-2 3-9 3-10-2-1-6 8-9 10-2H8" fill="none" stroke="#fff" strokeWidth="2.600" /><path d="M2 22C10 21 20 12 21 1c-4 1-8 2-12 3" fill="none" stroke="#8fd64a" strokeWidth="1.500" /></svg><span className="h-0.5 w-10 bg-[#76b9ed]" /></button>
      <div className="ml-auto flex h-full shrink-0 items-center">
        <span className="mr-[19px]">链接</span>
        <span className="mr-5 w-12 text-center leading-[17px]">13%<br />CPU使用</span>
        <button aria-label="显示隐藏的图标" className="mr-2.5"><svg viewBox="0 0 12 8" className="h-2 w-3"><path d="M1 7l5-5 5 5" fill="none" stroke="#fff" strokeWidth="1.300" /></svg></button>
        <svg viewBox="0 0 16 12" className="mr-[11px] h-3 w-4"><path d="M4.500 3.500h10v7h-9M2.500 5v6.500h3M1 0v2M4 0v2M.500 2.500h4v2l-2 1-2-1z" fill="none" stroke="#fff" /><path d="M7 5h6v4H7zM15 5h1v4h-1z" fill="#fff" /></svg>
        <svg viewBox="0 0 13 13" className="mr-2 h-[13px] w-[13px]"><path d="M1 12C1 6 6 1 12 1M4 12c0-4 4-8 8-8M7 12c0-3 2-5 5-5" fill="none" stroke="#ddd" strokeWidth="1.200" /><circle cx="11" cy="11" r="1.800" fill="#fff" /></svg>
        <svg viewBox="0 0 17 14" className="mr-2 h-3.5 w-[17px]"><path d="M1 5h3l4-4v12L4 9H1z" fill="none" stroke="#fff" /><path d="M10 5c1 1 1 3 0 4M12 3c2 2 2 6 0 8M14 1c3 3 3 9 0 12" fill="none" stroke="#ccc" /></svg>
        <svg viewBox="0 0 22 14" className="mr-[11px] h-3.5 w-[22px]"><path d="M.500 .500h21v13H.500z" fill="none" stroke="#fff" /><path d="M3 4.500h16M3 7.500h16" stroke="#fff" strokeDasharray="1 1" /><path d="M5 10.500h12" stroke="#fff" /></svg>
        <span className="mr-3.5">中</span>
        <Sogou className="mr-4 h-4 w-4" />
        <time className="mr-[18px] w-[60px] text-center leading-[19px]">21:51<br />2018/5/15</time>
        <button aria-label="通知" className="mr-3"><svg viewBox="0 0 24 24" className="h-6 w-6"><path d="M1 1h16v12H8l-3 3v-3H1z" fill="#fff" /><path d="M4 4.500h10M4 7h10M4 9.500h7" stroke="#111" /><circle cx="16" cy="16" r="7.500" fill="#333" stroke="#888" /><text x="16" y="20.500" textAnchor="middle" fontSize="12" fontWeight="bold" fontFamily="Noto Sans" fill="#fff">1</text></svg></button>
        <span className="mr-1 h-full w-px bg-[#4a4a4a]" />
      </div>
    </footer>
  );
}

function Notes() {
  return (
    <div className="pointer-events-none absolute inset-0 z-30 text-[#ff0000]">
      <svg className="absolute inset-0 h-full w-full" aria-hidden="true">
        <ellipse cx="531" cy="713" rx="238" ry="33" fill="none" stroke="#f00" strokeWidth="7" />
        <path d="M573 575L471 692" stroke="#f00" strokeWidth="7" />
        <path d="M582 565l-24 14 9 3 5 9z" fill="#f00" stroke="#f00" strokeWidth="5" strokeLinejoin="round" />
        <path d="M461 705l9-25 5 10 10 1z" fill="#f00" stroke="#f00" strokeWidth="5" strokeLinejoin="round" />
        <path d="M835 516l-14 25" stroke="#f00" strokeWidth="3" strokeLinecap="round" />
      </svg>
      <p className="absolute top-[510px] left-[548px] flex gap-[21px] text-[23px] leading-[30px] whitespace-nowrap"><span>这这是软件表示左标注排数</span><span>右标注排数</span></p>
      <p className="absolute top-[553px] left-[630px] text-[23px] leading-[30px] whitespace-nowrap">因为负筋长度一般不超过<b className="font-['Liberation_Sans',sans-serif] text-[22px]">1500mm</b></p>
      <p className="absolute top-[595px] left-[621px] text-[23px] leading-[30px] whitespace-nowrap">一排就够了，如果是<b className="font-['Liberation_Sans',sans-serif] text-[22px]">2000mm</b>，就按照排数<b className="font-['Liberation_Sans',sans-serif] text-[22px]">2/2</b></p>
      <p className="absolute top-[635px] left-[790px] text-[23px] leading-[30px]">输入</p>
    </div>
  );
}

export default function App() {
  return (
    <div className="relative flex h-screen min-h-[600px] flex-col overflow-hidden bg-[#f0f0f0] font-['Noto_Sans','Noto_Sans_CJK_SC',sans-serif] text-[12px] leading-4 text-black">
      <TitleBar />
      <MenuBar />
      <ViewBar />
      <main className="flex min-h-0 grow gap-1.5">
        <ModulePanel />
        <div className="flex min-w-0 grow flex-col">
          <PartBar />
          <div className="flex min-h-0 grow gap-[3px]">
            <PartPanel />
            <section className="flex min-w-0 grow flex-col border border-[#d8d8d8] bg-white">
              <div className="flex h-5 shrink-0 border-b border-[#d8d8d8]">
                <h2 className="h-5 border-r border-[#d8d8d8] bg-white px-[7px] leading-[18px]">属性编辑</h2>
              </div>
              <div className="mx-[3px] mt-[3px] mb-0.5 min-h-0 grow overflow-hidden border border-[#a0a0a8] bg-white pt-px pl-px font-['Liberation_Serif','Noto_Sans_CJK_SC',serif]">
                <PropertyTable />
              </div>
            </section>
          </div>
        </div>
      </main>
      <div className="flex h-[23px] shrink-0 items-end gap-[3px] pb-px font-['Liberation_Serif','Noto_Sans_CJK_SC',serif]">
        <span className={`${seg} w-[147px]`} />
        <span className={`${seg} w-[78px]`}>层高:4.5m</span>
        <span className={`${seg} w-[97px]`}>底标高:-0.05m</span>
        <span className={`${seg} w-12`}>0</span>
        <span className={`${seg} grow`}>请输入左标注排数/右标注排数，如2/2:输入一个数字时表示左右均同;</span>
        <span className={`${seg} w-[70px]`}>682.4 FPS</span>
      </div>
      <TaskBar />
      <Notes />
    </div>
  );
}
